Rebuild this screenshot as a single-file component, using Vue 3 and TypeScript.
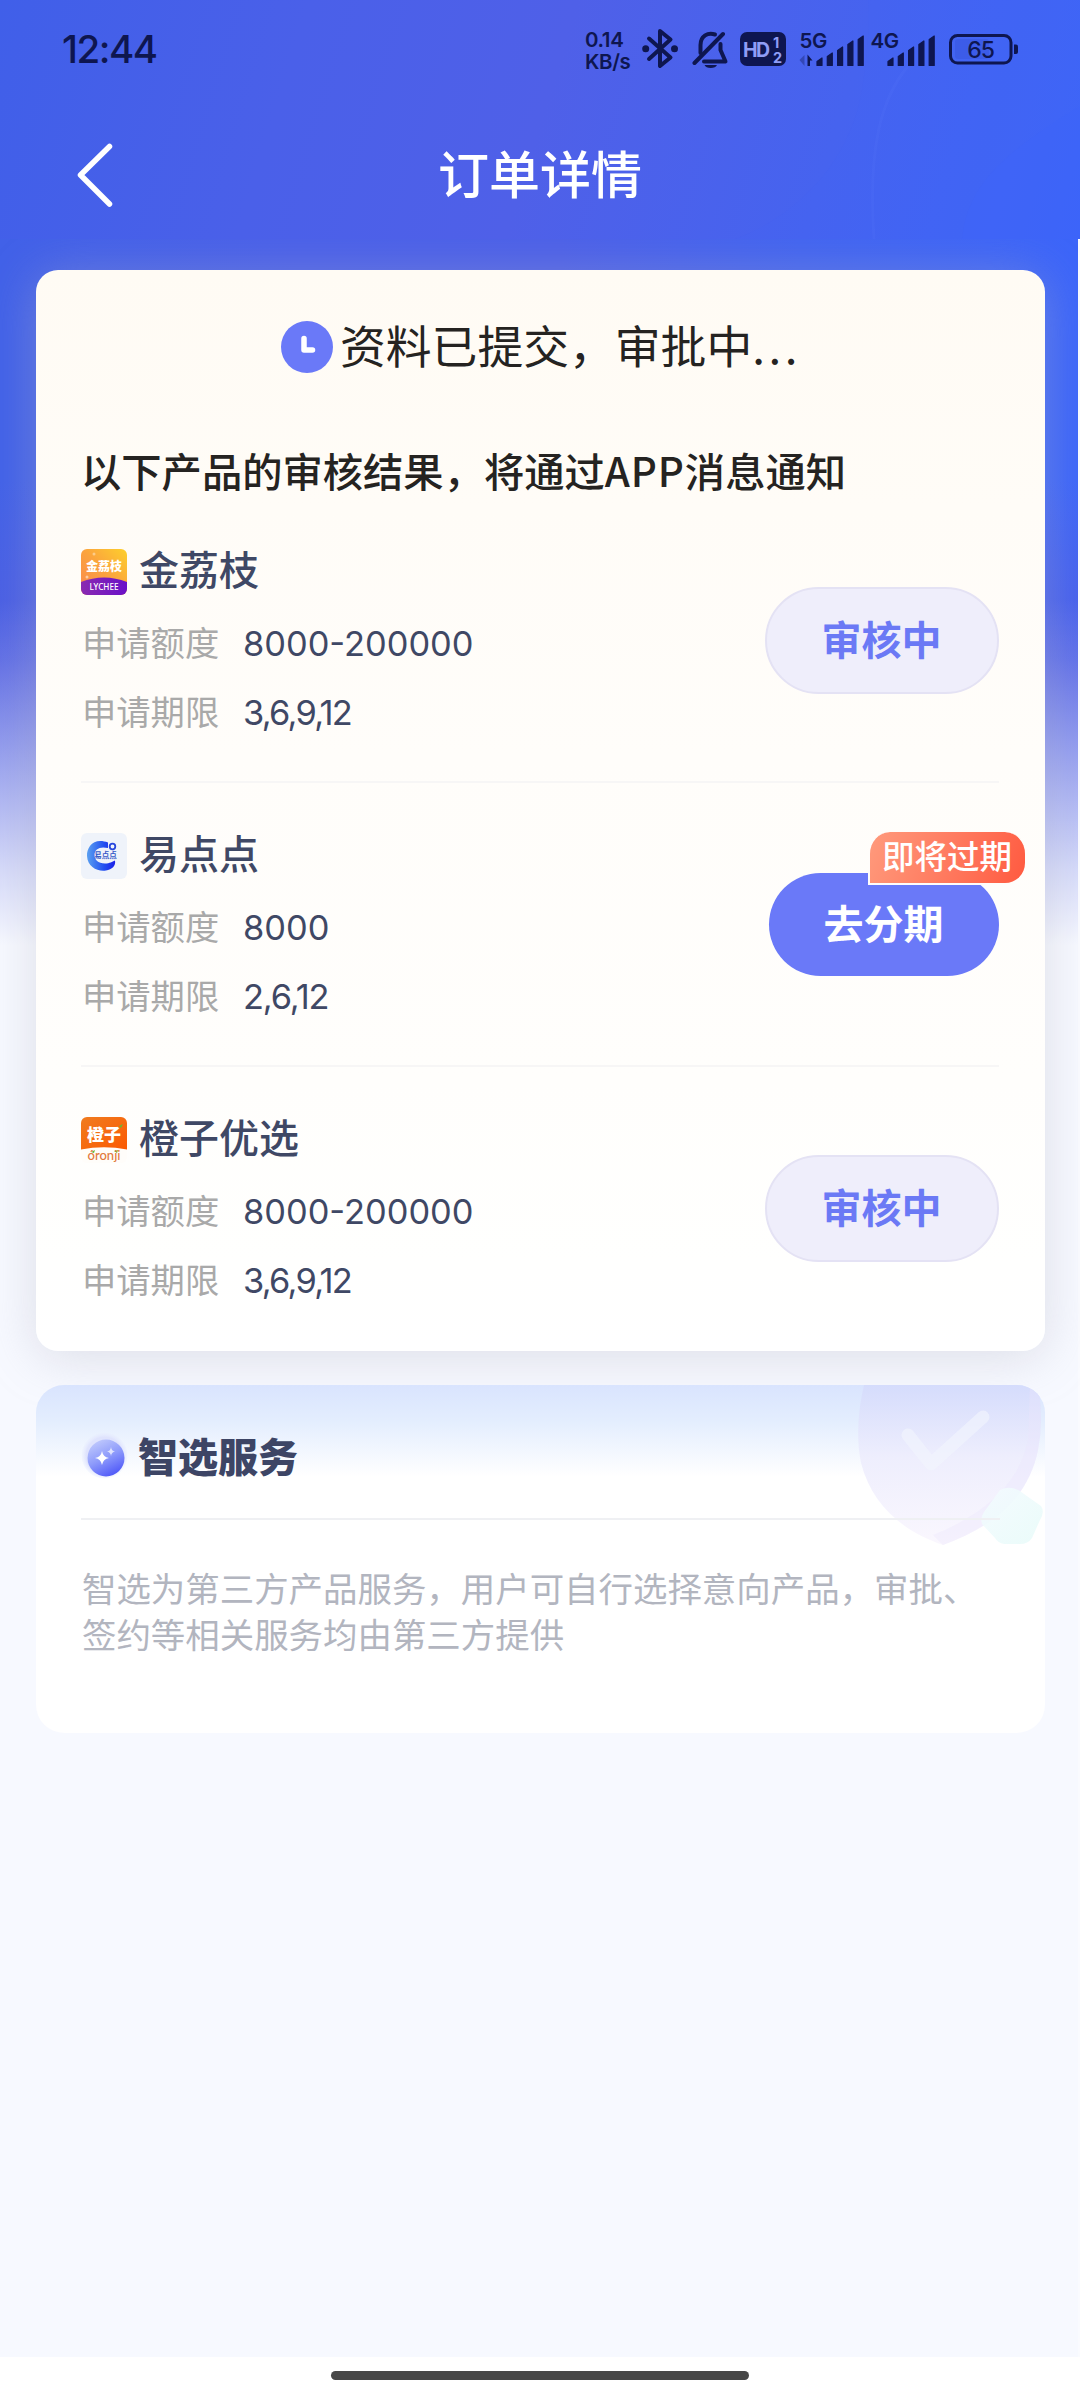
<script setup lang="ts">
interface Product {
  id: string
  name: string
  amount: string
  terms: string
  action: string
  primary: boolean
  badge?: string
}

const products: Product[] = [
  { id: 'lychee', name: '金荔枝', amount: '8000-200000', terms: '3,6,9,12', action: '审核中', primary: false },
  { id: 'yidian', name: '易点点', amount: '8000', terms: '2,6,12', action: '去分期', primary: true, badge: '即将过期' },
  { id: 'orange', name: '橙子优选', amount: '8000-200000', terms: '3,6,9,12', action: '审核中', primary: false },
]

const signalTops: number[] = [57, 52, 46, 40, 35]
</script>

<template>
  <div class="page">
    <header class="header">
      <svg class="header-deco" width="1080" height="239" viewBox="0 0 1080 239" aria-hidden="true">
        <path d="M735 239C800 215 850 160 862 90C868 50 870 20 868 0H1080V239Z" fill="#3b66fa" fill-opacity=".08" />
        <path d="M962 239C968 180 1010 150 1080 106V239Z" fill="#3a66ff" fill-opacity=".2" />
        <path d="M908 66C880 100 868 150 874 239" fill="none" stroke="#6f88ff" stroke-opacity=".09" stroke-width="3" />
      </svg>
      <div class="status-bar">
        <span class="time">12:44</span>
        <div class="speed"><span>0.14</span><span>KB/s</span></div>
        <svg class="ic-bt" width="38" height="42" viewBox="641 28 38 42">
          <path d="M649 38.5L670.5 57.5L660 66V31L670.5 39.500L649 59" fill="none" stroke="#0e1650" stroke-width="4" stroke-linejoin="round" stroke-linecap="round" />
          <circle cx="645.700" cy="48.700" r="3.500" fill="#0e1650" />
          <circle cx="674.500" cy="48.700" r="3.500" fill="#0e1650" />
        </svg>
        <svg class="ic-bell" width="38" height="42" viewBox="692 28 38 42">
          <g fill="none" stroke="#0e1650" stroke-width="4" stroke-linecap="round" stroke-linejoin="round">
            <path d="M694.500 63L723 34" />
            <path d="M700.500 53V45C700.500 36 708 32 715 34.500" />
            <path d="M720.500 44V50L725.500 61.500H704" />
          </g>
          <path d="M704.500 65H717A6.500 4 0 0 1 704.500 65Z" fill="#0e1650" />
        </svg>
        <svg class="ic-hd" width="46" height="36" viewBox="740 31 46 36">
          <rect x="740" y="32" width="46" height="34" rx="7" fill="#0e1650" />
          <text x="743" y="57" class="hd-text">HD</text>
          <text x="773" y="47.500" class="hd-num">1</text>
          <text x="773" y="63" class="hd-num">2</text>
        </svg>
        <svg class="ic-sig" width="66" height="50" viewBox="799 23 66 50">
          <text x="799.500" y="47" class="net">5G</text>
          <path d="M804.500 54V65L799.500 59Z" fill="#0e1650" fill-opacity=".35" />
          <path d="M807.500 65V53.500L812.500 59.500H810V65Z" fill="#0e1650" />
          <path v-for="(t, i) in signalTops" :key="t" :d="`M${817 + i * 10.3} 64.5V${t + 3.500}L${822 + i * 10.3} ${t}V64.5Z`" fill="#0e1650" stroke="#0e1650" stroke-width="1.200" stroke-linejoin="round" />
        </svg>
        <svg class="ic-sig2" width="66" height="50" viewBox="870 23 66 50">
          <text x="870.500" y="47" class="net">4G</text>
          <path v-for="(t, i) in signalTops" :key="t" :d="`M${888 + i * 10.3} 64.5V${t + 3.500}L${893 + i * 10.3} ${t}V64.5Z`" fill="#0e1650" stroke="#0e1650" stroke-width="1.200" stroke-linejoin="round" />
        </svg>
        <svg class="ic-bat" width="71" height="34" viewBox="948 32 71 34">
          <rect x="955" y="39" width="34" height="20" rx="3" fill="#3450d8" fill-opacity=".4" />
          <rect x="950.500" y="35.500" width="60.500" height="27.500" rx="7" fill="none" stroke="#0e1650" stroke-width="3" />
          <path d="M1014 44.500H1016A2 2 0 0 1 1018 46.500V52A2 2 0 0 1 1016 54H1014Z" fill="#0e1650" />
          <text x="980.500" y="58" text-anchor="middle" class="bat">65</text>
        </svg>
      </div>
      <div class="nav-bar">
        <svg class="back" width="40" height="70" viewBox="75 140 40 70">
          <path d="M109.500 146.500L80.500 175L109.500 204" fill="none" stroke="#fff" stroke-width="5.500" stroke-linecap="round" stroke-linejoin="round" />
        </svg>
        <h1 class="title">订单详情</h1>
      </div>
    </header>

    <main class="content">
      <section class="card">
        <div class="result">
          <svg width="52" height="52" viewBox="0 0 52 52">
            <circle cx="26" cy="26" r="26" fill="#6a79f8" />
            <path d="M23 17.500V29H31.500" fill="none" stroke="#fff" stroke-width="5.500" stroke-linecap="round" stroke-linejoin="round" />
          </svg>
          <span class="result-text">资料已提交，审批中<span class="dots">...</span></span>
        </div>
        <p class="notice">以下产品的审核结果，将通过<span class="app">APP</span>消息通知</p>

        <article v-for="p in products" :key="p.id" class="item">
          <div class="info">
            <div class="head">
              <svg v-if="p.id === 'lychee'" width="46" height="46" viewBox="0 0 46 46">
                <defs>
                  <linearGradient id="lg-a" x1="0" y1="1" x2="1" y2="0">
                    <stop offset="0" stop-color="#f98a4e" /><stop offset=".5" stop-color="#fba23e" /><stop offset="1" stop-color="#fdd02c" />
                  </linearGradient>
                  <linearGradient id="lg-b" x1="0" y1="0" x2="1" y2="0">
                    <stop offset="0" stop-color="#8a2bb0" /><stop offset="1" stop-color="#6a10c8" />
                  </linearGradient>
                  <clipPath id="cp-a"><rect width="46" height="46" rx="6" /></clipPath>
                </defs>
                <g clip-path="url(#cp-a)">
                  <rect width="46" height="46" fill="url(#lg-a)" />
                  <path d="M0 33Q23 24 46 33V46H0Z" fill="url(#lg-b)" />
                  <circle cx="13" cy="5" r="1.500" fill="#fff" fill-opacity=".4" />
                  <circle cx="6" cy="28" r="1.500" fill="#fff" fill-opacity=".5" />
                </g>
                <text x="23" y="21.500" text-anchor="middle" class="logo-cn">金荔枝</text>
                <text x="23" y="41" text-anchor="middle" class="logo-en" textLength="29" lengthAdjust="spacingAndGlyphs">LYCHEE</text>
              </svg>
              <svg v-else-if="p.id === 'yidian'" width="46" height="46" viewBox="0 0 46 46">
                <defs>
                  <linearGradient id="lg-c" x1="0" y1="0" x2="1" y2="0">
                    <stop offset="0" stop-color="#5aa0f0" /><stop offset=".6" stop-color="#2350f0" /><stop offset="1" stop-color="#1b1fe8" />
                  </linearGradient>
                </defs>
                <rect width="46" height="46" rx="6" fill="#eff3fa" />
                <path d="M27 9.500C13 4 5.500 14 6 23C6.500 34 17 39 25 37.500C31 36.500 35 33 34 27.500C31 28.500 29 30.500 24 30.500C17 30.500 13.500 26.500 13.500 22C13.500 16 19 13 27 15Z" fill="url(#lg-c)" />
                <circle cx="31.500" cy="13.500" r="2.800" fill="none" stroke="#2746dc" stroke-width="1.800" />
                <text x="24.500" y="25" text-anchor="middle" class="logo-yd">易点点</text>
              </svg>
              <svg v-else width="46" height="46" viewBox="0 0 46 46">
                <defs>
                  <linearGradient id="lg-d" x1="0" y1="0" x2="1" y2="1">
                    <stop offset="0" stop-color="#f07c20" /><stop offset="1" stop-color="#fb5a02" />
                  </linearGradient>
                </defs>
                <rect width="46" height="46" rx="6" fill="#fffdfa" />
                <path d="M0 6A6 6 0 0 1 6 0H40A6 6 0 0 1 46 6V32.500Q23 28 0 32.500Z" fill="url(#lg-d)" />
                <path d="M38 9L42 7L40 11Z" fill="#67b832" />
                <path d="M10 35L14 33L13 36Z M33 34L37 33L36 36Z" fill="#67b832" />
                <text x="23" y="24" text-anchor="middle" class="logo-cz">橙子</text>
                <text x="23" y="43" text-anchor="middle" class="logo-or" textLength="33" lengthAdjust="spacingAndGlyphs">óronji</text>
              </svg>
              <span class="name">{{ p.name }}</span>
            </div>
            <div class="row"><span class="label">申请额度</span><span class="value">{{ p.amount }}</span></div>
            <div class="row second"><span class="label">申请期限</span><span class="value terms" :class="{ short: p.terms.length < 8 }">{{ p.terms }}</span></div>
          </div>
          <div class="action" :class="{ primary: p.primary }">
            {{ p.action }}
            <span v-if="p.badge" class="badge">{{ p.badge }}</span>
          </div>
        </article>
      </section>

      <section class="service">
        <svg class="shield" width="188" height="172" viewBox="856 1385 188 172" aria-hidden="true">
          <defs>
            <linearGradient id="sh" x1="0" y1="0" x2="0" y2="1">
              <stop offset="0" stop-color="#d5dcfc" /><stop offset=".45" stop-color="#eeeefd" /><stop offset="1" stop-color="#faf7fe" />
            </linearGradient>
            <linearGradient id="gem" x1="0" y1="0" x2="1" y2="1">
              <stop offset="0" stop-color="#f4fbff" /><stop offset="1" stop-color="#e8fbf9" />
            </linearGradient>
          </defs>
          <path d="M864 1385H1038Q1044 1420 1038 1450C1028 1500 990 1528 943 1545C900 1530 872 1504 861 1463C856 1438 858 1410 864 1385Z" fill="url(#sh)" />
          <path d="M1038 1450C1028 1500 990 1528 943 1545L933 1535C990 1512 1020 1480 1028 1440L1030 1385H1038Q1044 1420 1038 1450Z" fill="#ece6fd" fill-opacity=".35" />
          <path d="M908 1435L931 1464L983 1417" fill="none" stroke="#f1f4fe" stroke-width="13" stroke-opacity=".65" stroke-linecap="round" stroke-linejoin="round" />
          <path d="M1000 1490Q1012 1484 1024 1494L1041 1506Q1045 1512 1040 1520L1032 1538Q1028 1544 1020 1544H1004Q998 1543 995 1538L982 1524Q980 1518 984 1512Z" fill="url(#gem)" fill-opacity=".9" />
        </svg>
        <div class="service-head">
          <svg width="48" height="50" viewBox="0 0 48 50">
            <defs>
              <linearGradient id="orb" x1=".2" y1="0" x2=".7" y2="1">
                <stop offset="0" stop-color="#c3ccfd" /><stop offset=".5" stop-color="#8e9bfb" /><stop offset="1" stop-color="#4d56f8" />
              </linearGradient>
              <radialGradient id="halo">
                <stop offset=".8" stop-color="#dfe3fd" /><stop offset="1" stop-color="#e8edfe" stop-opacity=".3" />
              </radialGradient>
            </defs>
            <circle cx="23.500" cy="24.500" r="23" fill="url(#halo)" />
            <circle cx="25" cy="27" r="18.500" fill="url(#orb)" />
            <path d="M21 20Q22 26 28 27Q22 28 21 34Q20 28 14 27Q20 26 21 20Z" fill="#fff" />
            <path d="M30 16Q30.500 20 34 20.500Q30.500 21 30 25Q29.500 21 26 20.500Q29.500 20 30 16Z" fill="#fff" fill-opacity=".7" />
          </svg>
          <h2 class="service-title">智选服务</h2>
        </div>
        <p class="service-text">智选为第三方产品服务，用户可自行选择意向产品，审批、<br>签约等相关服务均由第三方提供</p>
      </section>
    </main>

    <footer class="gesture"><span class="handle"></span></footer>
  </div>
</template>

<style>
body {
  background: #f7f9ff;
}
</style>

<style scoped>
.page {
  width: 1080px;
  height: 2400px;
  display: flex;
  flex-direction: column;
  overflow: hidden;
  color: #252321;
  background:
    linear-gradient(180deg, rgba(247, 249, 255, 0) 0, rgba(247, 249, 255, 0) 600px, rgba(247, 249, 255, .12) 660px, rgba(247, 249, 255, .36) 735px, rgba(247, 249, 255, .8) 870px, #f7f9ff 945px),
    linear-gradient(180deg, rgba(82, 92, 224, 0) 0, rgba(82, 92, 224, 0) 480px, rgba(82, 92, 224, .8) 680px),
    linear-gradient(90deg, #4161e8 0, #4a60e9 300px, #4c60e8 560px, #4264f0 800px, #3c65f9 1080px);
  font-family: "Noto Sans CJK SC", sans-serif;
}
.header {
  position: relative;
  flex: none;
  height: 239px;
  background: linear-gradient(107deg, #405fe9 0, #4a60e9 27%, #4f60e8 50%, #4663ef 76%, #3d65f8 100%);
}
.header-deco {
  position: absolute;
  inset: 0;
}
.status-bar {
  position: relative;
  height: 98px;
  display: flex;
  align-items: center;
  color: #0e1650;
  font-family: Inter, sans-serif;
}
.status-bar svg {
  flex: none;
}
.time {
  width: 523px;
  margin-left: 62px;
  font-size: 38.500px;
  font-weight: 500;
  letter-spacing: -1.500px;
}
.speed {
  display: flex;
  flex-direction: column;
  gap: 1px;
  width: 56px;
  margin-top: 4px;
  font-size: 20.500px;
  line-height: 20.500px;
  font-weight: 600;
  letter-spacing: -.4px;
}
.ic-bell { margin-left: 13px; }
.ic-hd { margin-left: 10px; }
.ic-sig { margin-left: 13px; }
.ic-sig2 { margin-left: 5px; }
.ic-bat { margin-left: 12px; }
.hd-text {
  font: 700 19.500px Inter, sans-serif;
  letter-spacing: -1.500px;
  fill: #8f9df6;
}
.hd-num {
  font: 700 14.500px Inter, sans-serif;
  fill: #8f9df6;
}
.net {
  font: 600 20.500px Inter, sans-serif;
  letter-spacing: -.5px;
  fill: #0e1650;
}
.bat {
  font: 500 23px Inter, sans-serif;
  letter-spacing: -1px;
  fill: #0e1650;
}
.nav-bar {
  position: relative;
  height: 140px;
  display: flex;
  align-items: center;
  padding-top: 7px;
  box-sizing: border-box;
}
.back {
  margin: 7px 0 0 75px;
}
.title {
  flex: 1;
  margin: 0 115px 0 0;
  text-align: center;
  color: #fff;
  font-size: 51px;
  font-weight: 500;
  line-height: 60px;
}
.content {
  flex: 1;
  box-sizing: border-box;
  padding: 31px 33.500px 0 36px;
  border-right: 2.500px solid #fafbff;
}
.card {
  box-sizing: border-box;
  height: 1081px;
  padding: 51px 46px 0 45px;
  border-radius: 22px;
  background: linear-gradient(180deg, #fffbf4 0, #fffcf7 22%, #fffdfa 45%, #fffefc 75%, #fffffe 92%, #fff 100%);
  box-shadow: 0 6px 50px rgba(180, 180, 194, .4);
}
.result {
  display: flex;
  align-items: center;
  height: 52px;
  padding-left: 200px;
}
.result-text {
  margin: -6px 0 0 7px;
  font-size: 45.800px;
  line-height: 52px;
  font-weight: 400;
}
.dots {
  letter-spacing: 3.500px;
}
.notice {
  margin: 69px 0 0;
  height: 57px;
  font-size: 40.300px;
  line-height: 56px;
  font-weight: 500;
  white-space: nowrap;
}
.app {
  letter-spacing: .9px;
}
.item {
  display: flex;
  justify-content: space-between;
  align-items: center;
  box-sizing: border-box;
  height: 284px;
  border-bottom: 2px solid #f7f6f6;
}
.item:last-child {
  border-bottom-color: transparent;
}
.info {
  align-self: flex-start;
  padding-top: 50px;
}
.head {
  display: flex;
  align-items: center;
  height: 46px;
}
.name {
  margin-left: 12px;
  margin-top: -8px;
  font-size: 40px;
  line-height: 46px;
  font-weight: 500;
  color: #3f4865;
}
.row {
  display: flex;
  align-items: center;
  height: 40px;
  margin-top: 26px;
  line-height: 40px;
}
.second {
  margin-top: 29px;
}
.label {
  width: 162px;
  box-sizing: border-box;
  padding-left: 1px;
  font-size: 34.300px;
  font-weight: 400;
  color: #a9a9a9;
}
.value {
  padding-top: 5px;
  font-family: Inter, sans-serif;
  font-size: 34.400px;
  color: #3f4865;
}
.terms {
  letter-spacing: -1.700px;
}
.terms.short {
  letter-spacing: -1.100px;
}
.action {
  position: relative;
  box-sizing: border-box;
  width: 234px;
  height: 107px;
  border: 2px solid #e4e2f4;
  border-radius: 54px;
  background: #efeefb;
  color: #6b79f5;
  font-size: 40px;
  line-height: 98px;
  font-weight: 700;
  text-align: center;
}
.action.primary {
  width: 230px;
  height: 103px;
  border: 0;
  background: #6a79f8;
  color: #fff;
}
.badge {
  position: absolute;
  right: -28px;
  top: -41px;
  box-sizing: border-box;
  width: 159px;
  height: 53px;
  border: solid #fffdfb;
  border-width: 0 2px 2px 2px;
  border-radius: 22px 22px 22px 0;
  background: linear-gradient(110deg, #ff9a7c 0, #ff7b60 50%, #ff5a40 100%);
  font-size: 32.500px;
  line-height: 46px;
  font-weight: 500;
}
.logo-cn {
  font: 900 12px "Noto Sans CJK SC", sans-serif;
  fill: #fff;
}
.logo-en {
  font: 500 8.500px "Noto Sans", sans-serif;
  fill: #fff;
}
.logo-yd {
  font: 700 7.500px "Noto Sans CJK SC", sans-serif;
  fill: #3558c8;
}
.logo-cz {
  font: 900 17px "Noto Sans CJK SC", sans-serif;
  fill: #fff;
}
.logo-or {
  font: 500 13px Lato, sans-serif;
  fill: #e27a3c;
}
.service {
  position: relative;
  height: 348px;
  margin-top: 34px;
  overflow: hidden;
  border-radius: 28px;
  background: #fff linear-gradient(180deg, #d9e4fe 0, #e4eefe 38px, #fff 92px);
}
.shield {
  position: absolute;
  right: 1px;
  top: 0;
}
.service-head {
  position: relative;
  display: flex;
  align-items: center;
  box-sizing: border-box;
  height: 135px;
  margin: 0 45px;
  padding-top: 9px;
  border-bottom: 2px solid #eff0f3;
}
.service-title {
  margin: -2px 0 0 9px;
  font-size: 40px;
  line-height: 50px;
  font-weight: 900;
  color: #3d4565;
}
.service-text {
  position: relative;
  margin: 44px 0 0 46px;
  font-size: 34.450px;
  line-height: 46px;
  font-weight: 400;
  color: #b2b5bf;
  white-space: nowrap;
}
.gesture {
  flex: none;
  display: flex;
  justify-content: center;
  height: 43px;
  background: #fff;
}
.handle {
  width: 418px;
  height: 9px;
  margin-top: 14px;
  border-radius: 5px;
  background: #474747;
}
</style>
